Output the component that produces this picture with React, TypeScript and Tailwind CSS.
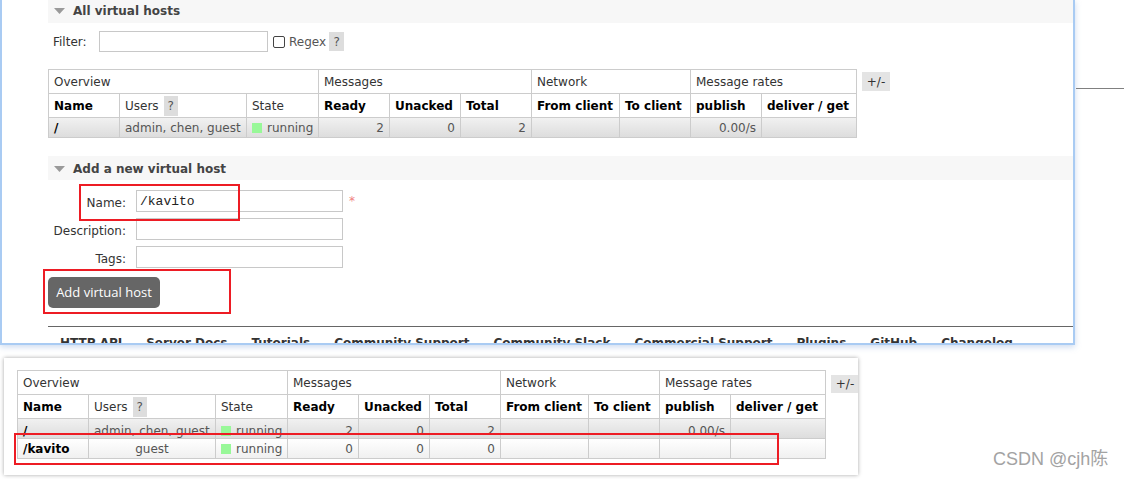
import React from "react";

const GRID =
  "grid grid-cols-[71px_127px_72px_71px_71px_71px_88px_71px_71px_95px]";
const CELL =
  "border-r border-b border-[#cccccc] flex items-center px-[5px] whitespace-nowrap overflow-hidden";

function Q() {
  return (
    <span className="ml-[5px] inline-flex h-[20px] w-[14px] items-center justify-center bg-[#dddddd] text-[#555]">
      ?
    </span>
  );
}

function Running() {
  return (
    <span className="flex items-center">
      <span className="mr-[5px] inline-block h-[10px] w-[10px] bg-[#98f898]" />
      <span>running</span>
    </span>
  );
}

function HeaderRows() {
  const bold = `${CELL} font-bold text-black`;
  return (
    <>
      <div className={`${GRID} h-[24px] bg-white`}>
        <div className={`${CELL} col-span-3`}>Overview</div>
        <div className={`${CELL} col-span-3`}>Messages</div>
        <div className={`${CELL} col-span-2`}>Network</div>
        <div className={`${CELL} col-span-2`}>Message rates</div>
      </div>
      <div className={`${GRID} h-[24px] bg-white`}>
        <div className={bold}>Name</div>
        <div className={CELL}>
          Users
          <Q />
        </div>
        <div className={CELL}>State</div>
        <div className={bold}>Ready</div>
        <div className={bold}>Unacked</div>
        <div className={bold}>Total</div>
        <div className={bold}>From client</div>
        <div className={bold}>To client</div>
        <div className={bold}>publish</div>
        <div className={bold}>deliver / get</div>
      </div>
    </>
  );
}

function DataRow({
  name,
  users,
  center,
  nums,
  rate,
  bg,
  shift,
}: {
  name: string;
  users: string;
  center?: boolean;
  nums: string[];
  rate: string;
  bg: string;
  shift?: boolean;
}) {
  const c = `${CELL} ${bg} text-[#555] ${shift ? "pt-[5px]" : ""}`;
  const r = `${c} justify-end`;
  return (
    <div className={`${GRID} h-[20px]`}>
      <div className={`${c} font-bold text-black`}>{name}</div>
      <div className={`${c} ${center ? "justify-center" : ""}`}>{users}</div>
      <div className={c}>
        <Running />
      </div>
      <div className={r}>{nums[0]}</div>
      <div className={r}>{nums[1]}</div>
      <div className={r}>{nums[2]}</div>
      <div className={c} />
      <div className={c} />
      <div className={r}>{rate}</div>
      <div className={c} />
    </div>
  );
}

const GRAY = "bg-linear-to-b from-[#f1f1f1] to-[#dddddd]";
const WHITE = "bg-linear-to-b from-[#ffffff] to-[#f0f0f0]";

function Triangle() {
  return (
    <svg width="11" height="6" viewBox="0 0 11 6" className="mr-[8px]">
      <polygon points="0,0 11,0 5.5,6" fill="#9a9a9a" />
    </svg>
  );
}

function SectionBar({ title, cls }: { title: string; cls: string }) {
  return (
    <div className={`flex items-center bg-[#f7f7f7] pl-[6px] ${cls}`}>
      <Triangle />
      <span className="font-bold text-[#444]">{title}</span>
    </div>
  );
}

const FOOTER = [
  "HTTP API",
  "Server Docs",
  "Tutorials",
  "Community Support",
  "Community Slack",
  "Commercial Support",
  "Plugins",
  "GitHub",
  "Changelog",
];

export default function App() {
  return (
    <div className="relative h-[479px] w-[1124px] overflow-hidden bg-white font-['DejaVu_Sans',Verdana,sans-serif] text-[12px] leading-[14px] text-[#333]">
      {/* upper screenshot window */}
      <div className="h-[345px] w-[1075px] overflow-hidden border-x-2 border-b-2 border-[#a9cbf3] bg-white shadow-[0_2px_6px_rgba(110,150,210,0.35)]">
        <div className="ml-[46px] flex flex-col">
          <SectionBar title="All virtual hosts" cls="h-[23px] pb-[1px]" />

          <div className="mt-[8px] flex h-[21px] items-center">
            <span className="w-[51px] pl-[5px] pt-[1px]">Filter:</span>
            <div className="h-[21px] w-[169px] border border-[#c8c8c8] bg-white" />
            <span className="ml-[5px] inline-block h-[12px] w-[12px] rounded-[2px] border border-[#444] bg-white" />
            <span className="ml-[4px] text-[#555]">Regex</span>
            <span className="ml-[3px] inline-flex h-[19px] w-[15px] items-center justify-center bg-[#dddddd] text-[#555]">
              ?
            </span>
          </div>

          <div className="mt-[17px] flex items-start">
            <div className="border-l border-t border-[#cccccc]">
              <HeaderRows />
              <DataRow
                name="/"
                users="admin, chen, guest"
                nums={["2", "0", "2"]}
                rate="0.00/s"
                bg={GRAY}
              />
            </div>
            <div className="ml-[5px] mt-[3px] flex h-[19px] w-[28px] items-center justify-center bg-[#e4e4e4]">
              +/-
            </div>
          </div>

          <SectionBar title="Add a new virtual host" cls="mt-[18px] h-[24px] pt-[1px]" />

          <div className="mt-[10px] flex flex-col gap-[6px]">
            <div className="flex h-[22px] items-center">
              <span className="w-[78px] pt-[4px] text-right">Name:</span>
              <div className="ml-[10px] flex h-[22px] w-[207px] items-center border border-[#c8c8c8] bg-white pl-[3px] pt-[1px] font-['Liberation_Mono',monospace] text-[13px] text-[#222]">
                /kavito
              </div>
              <span className="ml-[6px] self-start pt-[4px] text-[#f08080]">*</span>
            </div>
            <div className="flex h-[22px] items-center">
              <span className="w-[78px] pt-[4px] text-right">Description:</span>
              <div className="ml-[10px] h-[22px] w-[207px] border border-[#c8c8c8] bg-white" />
            </div>
            <div className="flex h-[22px] items-center">
              <span className="w-[78px] pt-[4px] text-right">Tags:</span>
              <div className="ml-[10px] h-[22px] w-[207px] border border-[#c8c8c8] bg-white" />
            </div>
          </div>

          <div className="mt-[9px] flex h-[31px] w-[112px] items-center justify-center rounded-[5px] bg-[#666666] pb-[1px] font-['Open_Sans',sans-serif] text-[13px] text-white">
            Add virtual host
          </div>

          <div className="mt-[18px] h-[1px] bg-[#666666]" />
          <div className="flex gap-[24px] pl-[12px] pt-[9px] font-bold text-[#333]">
            {FOOTER.map((f) => (
              <span key={f} className="whitespace-nowrap">
                {f}
              </span>
            ))}
          </div>
        </div>
      </div>

      {/* lower screenshot card */}
      <div className="ml-[4px] mt-[13px] flex h-[117px] w-[854px] items-start overflow-hidden bg-white pl-[13px] pt-[12px] shadow-[0_0_4px_rgba(0,0,0,0.35)]">
        <div className="shrink-0 border-l border-t border-[#cccccc]">
          <HeaderRows />
          <DataRow
            name="/"
            users="admin, chen, guest"
            nums={["2", "0", "2"]}
            rate="0.00/s"
            bg={GRAY}
            shift
          />
          <DataRow
            name="/kavito"
            users="guest"
            center
            nums={["0", "0", "0"]}
            rate=""
            bg={WHITE}
          />
        </div>
        <div className="ml-[5px] mt-[5px] flex h-[18px] w-[28px] shrink-0 items-center justify-center bg-[#e4e4e4]">
          +/-
        </div>
      </div>

      {/* page line to the right of the window */}
      <div className="absolute left-[1076px] top-[88px] h-[1px] w-[48px] bg-[#808080]" />

      {/* red annotation boxes */}
      <div className="absolute left-[79px] top-[184px] h-[37px] w-[161px] border-2 border-[#ed1c24]" />
      <div className="absolute left-[43px] top-[269px] h-[45px] w-[188px] border-2 border-[#ed1c24]" />
      <div className="absolute left-[14px] top-[433px] h-[32px] w-[765px] border-2 border-[#ed1c24]" />

      {/* watermark */}
      <div className="absolute left-[993px] top-[449px] font-['Liberation_Sans','Noto_Sans_CJK_SC',sans-serif] text-[18px] leading-[20px] text-[#a3a3a3]">
        CSDN @cjh陈
      </div>
    </div>
  );
}
